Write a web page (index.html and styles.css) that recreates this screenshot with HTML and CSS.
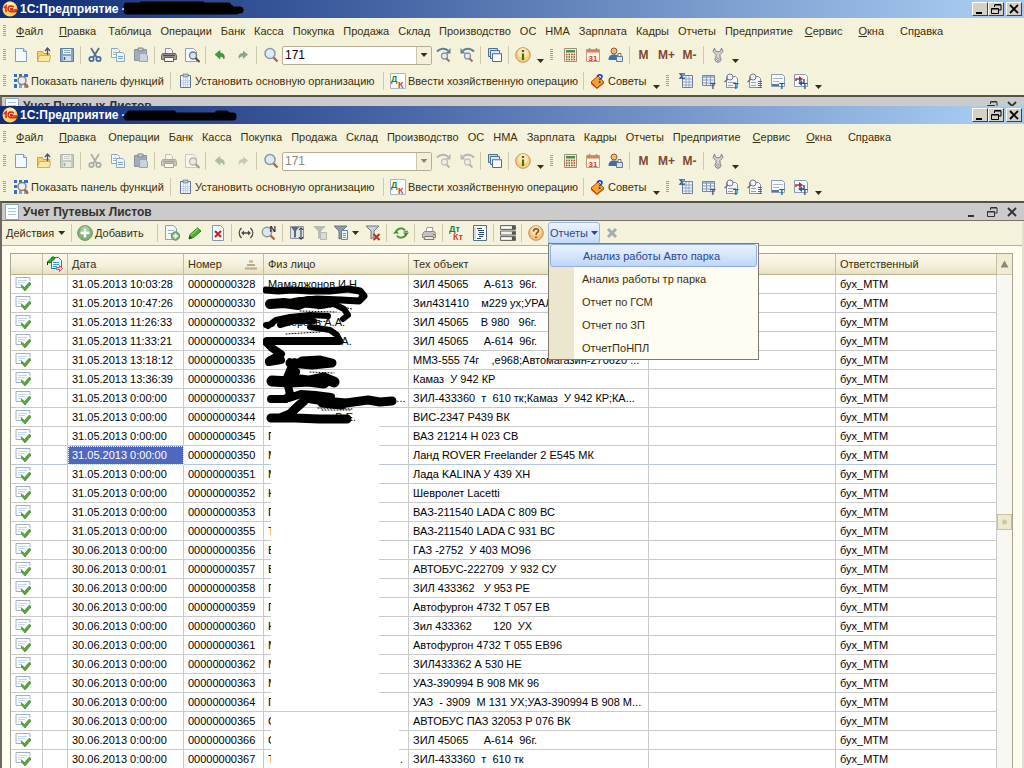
FILE: index.html
```html
<!DOCTYPE html>
<html lang="ru">
<head>
  <meta charset="UTF-8">
  <meta name="viewport" content="width=device-width, initial-scale=1.0">
  <title>1С:Предприятие - Учет Путевых Листов</title>
  <link rel="stylesheet" href="styles.css">
</head>
<body>
  <!-- Icon set, 16x16 -->
  <svg class="sprite" aria-hidden="true">
    <symbol id="logo" viewBox="0 0 16 16">
      <circle cx="8" cy="8" r="7.500" fill="#fbd25c"/><circle cx="8" cy="6" r="5.500" fill="#fdeaa0"/>
      <path d="M2 7l2-2v6M12 6c-3-2-6-1-6 2s2 3 9 2.500M11 8c-2-1-3 0-2 1h6" fill="none" stroke="#d9281c" stroke-width="1.600"/>
    </symbol>
    <symbol id="new" viewBox="0 0 16 16"><path d="M2.500 1.500h8l3 3v10h-11z" fill="#f4f9ff" stroke="#7f9dbd"/><path d="M10.500 1.500v3h3" fill="#cfdeee" stroke="#7f9dbd"/></symbol>
    <symbol id="open" viewBox="0 0 16 16"><path d="M1.500 14.500v-10h5l1 2h6v8z" fill="#f5cf6b" stroke="#cda044"/><path d="M1.500 14.500l2-6h11l-1 6z" fill="#fde9a6" stroke="#d9ae55"/><path d="M11.500 8V2M9 4l2.500-3L14 4" fill="none" stroke="#4b4f6b" stroke-width="1.300"/></symbol>
    <symbol id="save" viewBox="0 0 16 16"><path d="M1.500 1.500h13v13h-13z" fill="#86a8c8" stroke="#56799c"/><path d="M4 2h8v5H4z" fill="#eef5fb"/><path d="M5 3.500h6M5 5.500h6" stroke="#8fa8bd"/><path d="M4 9h8v5H4z" fill="#d2e0eb"/><path d="M5.500 10v3" stroke="#3f5f7e" stroke-width="1.500"/></symbol>
    <symbol id="cut" viewBox="0 0 16 16"><path d="M4 1l5.500 9M12 1L6.500 10" stroke="#5a6f86" stroke-width="1.800"/><circle cx="4.500" cy="12" r="2.200" fill="none" stroke="#3d6aa8" stroke-width="1.700"/><circle cx="11.500" cy="12" r="2.200" fill="none" stroke="#3d6aa8" stroke-width="1.700"/></symbol>
    <symbol id="copy" viewBox="0 0 16 16"><path d="M1.500 1.500h6l2 2v7h-8z" fill="#f2f7fc" stroke="#93a9c0"/><path d="M3 5.500h4M3 7.500h4" stroke="#9ab4d0"/><path d="M6.500 5.500h6l2 2v7h-8z" fill="#f2f7fc" stroke="#93a9c0"/><path d="M8 9.500h5M8 11.500h5" stroke="#7da2cc"/></symbol>
    <symbol id="paste" viewBox="0 0 16 16"><path d="M1.500 2.500h12v11h-12z" fill="#a3adb8" stroke="#8a94a0"/><path d="M5 1h5v3H5z" fill="#c9ced4" stroke="#7b858f"/><path d="M6.500 6.500h6l2 2v6h-8z" fill="#c8d3df" stroke="#96a4b3"/></symbol>
    <symbol id="print" viewBox="0 0 16 16"><path d="M4.500 6V1.500h5l2 2V6" fill="#fff" stroke="#8d8d9a"/><path d="M1.500 6.500h13l1 2v4h-15v-4z" fill="#a79f9c" stroke="#6e6462"/><path d="M3.500 10.500h9v4h-9z" fill="#fff" stroke="#6e5050"/><path d="M2 8.500h12" stroke="#5a4b49" stroke-width="1.500"/></symbol>
    <symbol id="preview" viewBox="0 0 16 16"><path d="M1.500 1.500h8l3 3v10h-11z" fill="#f6faff" stroke="#8ba3bd"/><circle cx="9" cy="8.500" r="3.500" fill="#d5e5f5" stroke="#70777f" stroke-width="1.300"/><path d="M11.500 11l4 4" stroke="#5b4b45" stroke-width="2.200"/></symbol>
    <symbol id="undo" viewBox="0 0 16 16"><path d="M3 7.500l5-4v2.500c4 0 5 3 4 6-1-2-2-2.500-4-2.500V12z" fill="#3f9a3a" stroke="#2f7b2c" stroke-width=".5"/></symbol>
    <symbol id="redo" viewBox="0 0 16 16"><path d="M13 7.500l-5-4v2.500c-4 0-5 3-4 6 1-2 2-2.500 4-2.500V12z" fill="#8aa58c"/></symbol>
    <symbol id="find" viewBox="0 0 16 16"><circle cx="7" cy="6.500" r="5" fill="#dcebf9" stroke="#8a97a6" stroke-width="1.500"/><path d="M10.500 10.500l4 4" stroke="#a8664f" stroke-width="2.400"/></symbol>
    <symbol id="find-next" viewBox="0 0 16 16"><path d="M1 4.500C4 1 9 .8 12 3.500" fill="none" stroke="#5c8097" stroke-width="2"/><path d="M14.500 1v5.500H9.500z" fill="#5c8097"/><circle cx="8.500" cy="9" r="3" fill="#e3edf5" stroke="#8794a2" stroke-width="1.300"/><path d="M10.500 11.500l3 3" stroke="#a0705e" stroke-width="2"/></symbol>
    <symbol id="find-prev" viewBox="0 0 16 16"><path d="M15 4.500C12 1 7 .8 4 3.500" fill="none" stroke="#5c8097" stroke-width="2"/><path d="M1.500 1v5.500h5z" fill="#5c8097"/><circle cx="8.500" cy="9" r="3" fill="#e3edf5" stroke="#8794a2" stroke-width="1.300"/><path d="M10.500 11.500l3 3" stroke="#a0705e" stroke-width="2"/></symbol>
    <symbol id="windows" viewBox="0 0 16 16"><path d="M1.500 1.500h9v8h-9z" fill="#c4d9ec" stroke="#4b7196"/><path d="M3.500 3.500h9v8h-9z" fill="#dbe9f6" stroke="#4b7196"/><path d="M5.500 6.500h9v8h-9z" fill="#fff" stroke="#4b7196"/><path d="M6 7h8" stroke="#8cb2d6"/></symbol>
    <symbol id="info" viewBox="0 0 16 16"><circle cx="8" cy="8" r="7.300" fill="#f6cf79" stroke="#bd9262"/><circle cx="8" cy="6" r="5" fill="#fbe7b4"/><path d="M8 3v2M8 6.500V13" stroke="#4f6b17" stroke-width="2.200"/></symbol>
    <symbol id="calc" viewBox="0 0 16 16"><path d="M2.500 1.500h12v13h-12z" fill="#f3efc9" stroke="#9c9176"/><path d="M4 3h9v2.500H4z" fill="#4f8a4e"/><path d="M4 7.500h9M4 10h9M4 12.500h9" stroke="#a24d33" stroke-width="1.400" stroke-dasharray="1.500 1"/></symbol>
    <symbol id="calendar" viewBox="0 0 16 16"><path d="M1.500 2.500h13v12h-13z" fill="#fff5ea" stroke="#c99a83"/><path d="M2 3h12v2.500H2z" fill="#e27e4b"/><path d="M4.500 1v3M11.500 1v3" stroke="#8a96a8" stroke-width="1.500"/><text x="8" y="13.500" class="glyph red" text-anchor="middle">31</text></symbol>
    <symbol id="user" viewBox="0 0 16 16"><circle cx="6" cy="4" r="3" fill="#f3bb65" stroke="#7f6340"/><path d="M.5 13c0-4 2-5.500 5.500-5.500s4.500 1 5 3.500v2z" fill="#3e6fa6"/><path d="M8.500 9.500h6v5h-6z" fill="#dbe5f0" stroke="#5f7792"/><path d="M10 9V6.500h3V9" fill="none" stroke="#5f7792"/></symbol>
    <symbol id="wrench" viewBox="0 0 16 16"><path d="M4.500 1l-1.500 3.500 3 3v2.500a3 3 0 1 0 4 0V7.500l3-3L11.500 1l-1 3L8 5 5.500 4z" fill="#d3d3d6" stroke="#77777f" stroke-width=".9"/><circle cx="8" cy="12.300" r="1.200" fill="#f5f2dc" stroke="#77777f" stroke-width=".7"/></symbol>
    <symbol id="panel" viewBox="0 0 16 16"><path d="M1 1h3v3H1zM6 1h3v3H6zM11 1h4v3h-4zM1 6h3v3H1zM1 11h3v4H1z" fill="#2f6fd0"/><path d="M6 11h3v4H6zM11 11h4v4h-4z" fill="#7aa8e6"/><circle cx="9" cy="7.500" r="4" fill="#e4f0fb" stroke="#8a7d70" stroke-width="1.400"/><path d="M11.500 10.500l3.500 4" stroke="#b0673d" stroke-width="2.200"/></symbol>
    <symbol id="org" viewBox="0 0 16 16"><path d="M3.500 2.500h10v12h-10z" fill="#f4f8fd" stroke="#5d7592"/><path d="M6 1h5v3H6z" fill="#b6c8dc" stroke="#5d7592" stroke-width=".7"/><path d="M6.500 5v9M8.500 5v9M10.500 5v9M4 7.500h9M4 9.500h9M4 11.500h9" stroke="#b9cce0" stroke-width=".8"/></symbol>
    <symbol id="dk" viewBox="0 0 16 16"><path d="M.5.500h15v15H.5z" fill="#fff" stroke="#a9b9cb"/><text x="1" y="9" class="glyph green mid">Д</text><text x="8" y="15" class="glyph red mid">К</text></symbol>
    <symbol id="tips" viewBox="0 0 16 16"><path d="M1 9l7-6 6 6-7 6z" fill="#f7a51c" stroke="#a25008"/><path d="M1 9.500l6 5.500v1L1 11zM7 15l7-5.500v1L7 16z" fill="#c6331d"/><text x="6" y="10" class="glyph blue big">?</text></symbol>
    <symbol id="rep-sum" viewBox="0 0 16 16"><path d="M4.500 2.500h10v12h-10z" fill="#f2f6fb" stroke="#6d819c"/><path d="M5 6h9M5 9h9M5 12h9M8 3v11M11 3v11" stroke="#8fa6c4"/><path d="M7 .8H2l2 2.200-2 2.200h5" fill="none" stroke="#24508f" stroke-width="1.200"/></symbol>
    <symbol id="rep-table" viewBox="0 0 16 16"><path d="M1.500 2.500h12v10h-12z" fill="#f2f6fb" stroke="#7487a3"/><path d="M2 4h11" stroke="#9dbadd" stroke-width="2"/><path d="M2 7h11M2 10h11M5.500 3v9M9.500 3v9" stroke="#8599b5"/><text x="9" y="15.500" class="glyph teal mid">T</text></symbol>
    <symbol id="rep-find" viewBox="0 0 16 16"><path d="M2.500 3.500h9l2 2v9h-11z" fill="#f2f4f8" stroke="#848da0"/><path d="M4 9.500h8M4 12.500h5" stroke="#9aa4b6"/><circle cx="6" cy="4" r="3" fill="#eef3fa" stroke="#7d7885"/><path d="M4 6L.5 9" stroke="#7d6f72" stroke-width="1.500"/><text x="9" y="15.500" class="glyph teal mid">T</text></symbol>
    <symbol id="rep-list" viewBox="0 0 16 16"><path d="M2.500 3.500h9l2 2v9h-11z" fill="#f2f4f8" stroke="#848da0"/><path d="M4 9.500h5M4 12.500h5" stroke="#9aa4b6"/><circle cx="6" cy="4" r="3" fill="#eef3fa" stroke="#7d7885"/><path d="M4 6L.5 9" stroke="#7d6f72" stroke-width="1.500"/><path d="M11 8.500h4M11 10.500h4M11 12.500h4M11 14.500h4" stroke="#8a5b4a"/></symbol>
    <symbol id="rep-text" viewBox="0 0 16 16"><path d="M1.500 1.500h11l2 2v10h-13z" fill="#f6f9fd" stroke="#8d9bb3"/><path d="M3 5.500h10M3 8.500h6" stroke="#a7b5c9"/><path d="M2 12h7" stroke="#5f7595" stroke-width="2"/><text x="9" y="15.500" class="glyph teal mid">T</text></symbol>
    <symbol id="rep-swap" viewBox="0 0 16 16"><path d="M1.500 1.500h11l2 2v10h-13z" fill="#f6f9fd" stroke="#8d9bb3"/><path d="M3 8V6h4" fill="none" stroke="#9c3b32" stroke-width="1.500"/><path d="M6 3l4 3-4 3z" fill="#9c3b32"/><path d="M11 6v4H8" fill="none" stroke="#2d5e98" stroke-width="1.500"/><path d="M9 7.500l-4 2.500 4 3z" fill="#2d5e98"/><text x="9" y="15.500" class="glyph teal mid">T</text></symbol>
    <symbol id="list" viewBox="0 0 16 16"><path d="M1.500.500h13v15h-13z" fill="#fbfdff" stroke="#8ea6bf"/><path d="M4 4.500h8M4 7.500h8M4 10.500h8" stroke="#a9c6e3"/></symbol>
    <symbol id="add" viewBox="0 0 16 16"><circle cx="8" cy="8" r="7.400" fill="#7fb476" stroke="#6b9a67"/><circle cx="8" cy="5.500" r="4.500" fill="#a3cb9a"/><path d="M8 3.500v9M3.500 8h9" stroke="#fff" stroke-width="2.400"/></symbol>
    <symbol id="add-copy" viewBox="0 0 16 16"><path d="M1.500.500h8l3 3v11h-11z" fill="#f3f8fd" stroke="#8aa1b8"/><path d="M4 5.500h6M4 8.500h4" stroke="#9fb4ca"/><circle cx="11.500" cy="11" r="4.200" fill="#7fb476" stroke="#5f9160"/><path d="M11.500 8.500v5M9 11h5" stroke="#fff" stroke-width="1.600"/></symbol>
    <symbol id="edit" viewBox="0 0 16 16"><path d="M2 14l1-4.500L10.500 3l3.500 3-7.500 6.500z" fill="#4eb12d" stroke="#2c7d18"/><path d="M4 10l7-6" stroke="#a8e08a"/><path d="M2 14l.7-3 2.300 2z" fill="#2d2d1d"/></symbol>
    <symbol id="delete" viewBox="0 0 16 16"><path d="M2.500.500h8l3 3v12h-11z" fill="#f6faff" stroke="#7f97b2"/><path d="M5 6l6 6M11 6l-6 6" stroke="#c6251c" stroke-width="2.200"/></symbol>
    <symbol id="period" viewBox="0 0 16 16"><path d="M3.500 3C.5 6 .5 10 3.500 13M12.500 3c3 3 3 7 0 10M4 8h8" fill="none" stroke="#4b4b45" stroke-width="1.400"/><path d="M3 8l3-2.500v5zM13 8l-3-2.500v5z" fill="#4b4b45"/></symbol>
    <symbol id="find-num" viewBox="0 0 16 16"><circle cx="6" cy="7" r="4.700" fill="#d9e7f4" stroke="#8a97a6" stroke-width="1.400"/><path d="M9.500 10.500l4 4" stroke="#a8664f" stroke-width="2.400"/><text x="8.500" y="7" class="glyph navy mid">N</text></symbol>
    <symbol id="filter-set" viewBox="0 0 16 16"><path d="M1.500 1.500h13v12h-13z" fill="#dfe4ea" stroke="#8d949d"/><path d="M2 2h8L7 6v6l-2 1V6z" fill="#5c6b7c"/><path d="M12 3v11M10 5l2-2.500L14 5M10 12l2 2.500 2-2.500" fill="none" stroke="#222b38"/></symbol>
    <symbol id="filter-cell" viewBox="0 0 16 16"><path d="M1 1h13L9 6v7l-3 1V6z" fill="#b9bbb7"/><path d="M8.500 7.500h6v7h-6z" fill="#dcdcd6" stroke="#b5b7b3"/></symbol>
    <symbol id="filter-list" viewBox="0 0 16 16"><path d="M1 1h13L9 6v7l-3 1V6z" fill="#8f9aa4" stroke="#6b7884"/><path d="M8.500 5.500h6v9h-6z" fill="#edf4fb" stroke="#5f83a8"/><path d="M10 8.500h3M10 10.500h3M10 12.500h3" stroke="#6f9ac4"/></symbol>
    <symbol id="filter-off" viewBox="0 0 16 16"><path d="M1 1h13L9 6v6l-3 2V6z" fill="#c9d1d8" stroke="#6b7884"/><path d="M8.500 9l6 6M14.500 9l-6 6" stroke="#b8301f" stroke-width="2"/></symbol>
    <symbol id="refresh" viewBox="0 0 16 16"><path d="M3 7c1-4 7-5 9-1.500M13 9c-1 4-7 5-9 1.500" fill="none" stroke="#4c9a42" stroke-width="2"/><path d="M15 5.500L9.500 7h5zM0 8.500h6L3 5.500zM16 7.500h-6l3 3.500z" fill="#3c8735"/></symbol>
    <symbol id="printer" viewBox="0 0 16 16"><path d="M5 7l1-4.500h6l-1 4.500" fill="#fff" stroke="#9a9a9a"/><path d="M1.500 8.500l2-2h10l1 2v4h-13z" fill="#c3c1ba" stroke="#8b8a84"/><path d="M4 11.500h8l1 3H3z" fill="#e9e7df" stroke="#77766f"/><path d="M12 9.500h1.500" stroke="#c23b2a"/></symbol>
    <symbol id="dtkt" viewBox="0 0 16 16"><text x="0" y="7" class="glyph green mid">Дт</text><text x="4" y="15" class="glyph red mid">Кт</text></symbol>
    <symbol id="text" viewBox="0 0 16 16"><path d="M1.500.500h13v15h-13z" fill="#fff" stroke="#55708c"/><path d="M3 2v12" stroke="#9dbcd8"/><path d="M5 3.500h5M6 5.500h6M7 7.500h5M6 9.500h6M7 11.500h4M5 13.500h4" stroke="#1f4466"/></symbol>
    <symbol id="rows" viewBox="0 0 16 16"><path d="M.5.500h15v4H.5zM.5 6h15v4H.5zM.5 11.500h15v4H.5z" fill="#e5e5e1" stroke="#6c6c68"/><path d="M12 1h3v3h-3zM12 6.500h3v3h-3zM12 12h3v3h-3z" fill="#55554f"/><path d="M2 2.500h8M2 8h8M2 13.500h8" stroke="#fff"/></symbol>
    <symbol id="help" viewBox="0 0 16 16"><circle cx="8" cy="8" r="7.300" fill="#f3c179" stroke="#c08f57"/><circle cx="8" cy="6" r="5" fill="#f9deb0"/><path d="M5.500 6.500c0-4 5.500-3.500 5-.5-.3 1.500-2.500 1.500-2.500 4M8 11.500v1.500" fill="none" stroke="#7f4a1f" stroke-width="1.500"/></symbol>
    <symbol id="cross" viewBox="0 0 16 16"><path d="M4 4l8 8M12 4l-8 8" stroke="#a3adb3" stroke-width="3"/></symbol>
    <symbol id="sort" viewBox="0 0 16 16"><path d="M6 5.500h4M4 9h8M2 12.500h12" stroke="#b9ac80" stroke-width="2"/></symbol>
    <symbol id="state" viewBox="0 0 16 16"><path d="M4.500 1.500h7l3 3v8h-10z" fill="#f1fbff" stroke="#2b72b9"/><path d="M6 6.500h6M6 8.500h6M6 10.500h4" stroke="#36a3d5"/><path d="M.5 6L6 .5l2 2L3 7z" fill="#2fae2a" stroke="#14611a"/><path d="M.5 6v3" stroke="#222"/><path d="M9.500 11.500h3v-2l3 3-3 3v-2h-3z" fill="#fbc4d2" stroke="#cf2f5f" stroke-width=".8"/></symbol>
    <symbol id="posted" viewBox="0 0 16 16"><path d="M15 5V1.500H1v10h6" fill="#fcfdff" stroke="#9cb2c6"/><path d="M3 4.500h9M3 6.500h7M3 8.500h4" stroke="#c3d6e8"/><path d="M6.500 9l3 2.500L14.500 6l1.500 2-6 7-3.500-4z" fill="#55a838" stroke="#3b8728" stroke-width=".7"/></symbol>
    <symbol id="min" viewBox="0 0 12 12"><path d="M2 10h6" stroke="currentColor" stroke-width="2"/></symbol>
    <symbol id="restore" viewBox="0 0 12 12"><path d="M4.500 4V2H11v5H9M4.500 1.500H11" fill="none" stroke="currentColor"/><path d="M1.500 5.500h7v5h-7zM1.500 6h7" fill="none" stroke="currentColor"/></symbol>
    <symbol id="close" viewBox="0 0 12 12"><path d="M2 2l8 8M10 2l-8 8" stroke="currentColor" stroke-width="1.800"/></symbol>
  </svg>

  <!-- Back window -->
  <section class="window window-back">
    <header class="titlebar">
      <svg class="icon"><use href="#logo"/></svg>
      <h1>1C:Предприятие -</h1>
      <svg class="smear" viewBox="0 0 120 14"><path d="M1 4h101M1 9h109M16 3h60M96 8h18M8 6h96" fill="none" stroke="#000" stroke-width="7" stroke-linecap="round"/></svg>
      <div class="win-buttons">
        <button aria-label="Свернуть"><svg><use href="#min"/></svg></button>
        <button aria-label="Восстановить"><svg><use href="#restore"/></svg></button>
        <button class="win-close" aria-label="Закрыть"><svg><use href="#close"/></svg></button>
      </div>
    </header>
    <nav class="menubar">
      <span class="grip"></span>
      <div class="menu-group wide"><button><u>Ф</u>айл</button><button><u>П</u>равка</button></div>
      <div class="menu-group"><button>Таблица</button><button>Операции</button><button>Банк</button><button>Касса</button><button>Покупка</button><button>Продажа</button><button>Склад</button><button>Производство</button><button>ОС</button><button>НМА</button><button>Зарплата</button><button>Кадры</button><button>Отчеты</button><button>Предприятие</button></div>
      <div class="menu-group wide"><button><u>С</u>ервис</button><button><u>О</u>кна</button><button>Сп<u>р</u>авка</button></div>
    </nav>
    <div class="toolbar">
      <span class="grip"></span>
      <button class="tool" aria-label="Новый"><svg class="icon"><use href="#new"/></svg></button>
      <button class="tool" aria-label="Открыть"><svg class="icon"><use href="#open"/></svg></button>
      <button class="tool" aria-label="Сохранить"><svg class="icon"><use href="#save"/></svg></button>
      <span class="sep"></span>
      <button class="tool" aria-label="Вырезать"><svg class="icon"><use href="#cut"/></svg></button>
      <button class="tool" aria-label="Копировать"><svg class="icon"><use href="#copy"/></svg></button>
      <button class="tool" aria-label="Вставить"><svg class="icon"><use href="#paste"/></svg></button>
      <span class="sep"></span>
      <button class="tool" aria-label="Печать"><svg class="icon"><use href="#print"/></svg></button>
      <button class="tool" aria-label="Просмотр"><svg class="icon"><use href="#preview"/></svg></button>
      <span class="sep"></span>
      <button class="tool" aria-label="Отменить"><svg class="icon"><use href="#undo"/></svg></button>
      <button class="tool" aria-label="Вернуть"><svg class="icon"><use href="#redo"/></svg></button>
      <span class="sep"></span>
      <button class="tool" aria-label="Найти"><svg class="icon"><use href="#find"/></svg></button>
      <div class="search"><input type="text" value="171" aria-label="Поиск"><button aria-label="История поиска"><span class="arrow"></span></button></div>
      <button class="tool" aria-label="Найти следующий"><svg class="icon"><use href="#find-next"/></svg></button>
      <button class="tool" aria-label="Найти предыдущий"><svg class="icon"><use href="#find-prev"/></svg></button>
      <span class="sep"></span>
      <button class="tool" aria-label="Окна"><svg class="icon"><use href="#windows"/></svg></button>
      <span class="sep"></span>
      <button class="tool" aria-label="Справка"><svg class="icon"><use href="#info"/></svg></button>
      <button class="more" aria-label="Еще"><span class="arrow"></span></button>
      <span class="grip"></span>
      <button class="tool" aria-label="Калькулятор"><svg class="icon"><use href="#calc"/></svg></button>
      <button class="tool" aria-label="Календарь"><svg class="icon"><use href="#calendar"/></svg></button>
      <button class="tool" aria-label="Пользователи"><svg class="icon"><use href="#user"/></svg></button>
      <span class="sep"></span>
      <button class="tool memory">M</button>
      <button class="tool memory">M+</button>
      <button class="tool memory">M-</button>
      <span class="sep"></span>
      <button class="tool" aria-label="Сервис"><svg class="icon"><use href="#wrench"/></svg></button>
      <button class="more" aria-label="Еще"><span class="arrow"></span></button>
    </div>
    <div class="toolbar toolbar-text">
      <span class="grip"></span>
      <button class="command cmd-panel"><svg class="icon"><use href="#panel"/></svg>Показать панель функций</button>
      <span class="sep"></span>
      <button class="command cmd-org"><svg class="icon"><use href="#org"/></svg>Установить основную организацию</button>
      <span class="sep"></span>
      <button class="command cmd-entry"><svg class="icon"><use href="#dk"/></svg>Ввести хозяйственную операцию</button>
      <span class="sep"></span>
      <button class="command cmd-tips"><svg class="icon"><use href="#tips"/></svg>Советы</button>
      <button class="more" aria-label="Еще"><span class="arrow"></span></button>
      <span class="grip"></span>
      <button class="tool" aria-label="Итоги"><svg class="icon"><use href="#rep-sum"/></svg></button>
      <button class="tool" aria-label="Таблица"><svg class="icon"><use href="#rep-table"/></svg></button>
      <button class="tool" aria-label="Анализ счета"><svg class="icon"><use href="#rep-find"/></svg></button>
      <button class="tool" aria-label="Карточка"><svg class="icon"><use href="#rep-list"/></svg></button>
      <button class="tool" aria-label="Отчет"><svg class="icon"><use href="#rep-text"/></svg></button>
      <button class="tool" aria-label="Обороты"><svg class="icon"><use href="#rep-swap"/></svg></button>
      <button class="more" aria-label="Еще"><span class="arrow"></span></button>
    </div>
    <div class="caption">
      <svg class="icon"><use href="#list"/></svg>
      <h2>Учет Путевых Листов</h2>
      <div class="caption-buttons">
        <button aria-label="Восстановить"><svg><use href="#restore"/></svg></button>
        <button aria-label="Закрыть"><svg><use href="#close"/></svg></button>
      </div>
    </div>
  </section>

  <!-- Front window -->
  <section class="window window-front">
    <header class="titlebar">
      <svg class="icon"><use href="#logo"/></svg>
      <h1>1C:Предприятие -</h1>
      <svg class="smear" viewBox="0 0 120 14"><path d="M1 9h93M4 6h43M4 8h103M66 9h41M92 6h8" fill="none" stroke="#000" stroke-width="7" stroke-linecap="round"/></svg>
      <div class="win-buttons">
        <button aria-label="Свернуть"><svg><use href="#min"/></svg></button>
        <button aria-label="Восстановить"><svg><use href="#restore"/></svg></button>
        <button class="win-close" aria-label="Закрыть"><svg><use href="#close"/></svg></button>
      </div>
    </header>
    <nav class="menubar">
      <span class="grip"></span>
      <div class="menu-group wide"><button><u>Ф</u>айл</button><button><u>П</u>равка</button></div>
      <div class="menu-group"><button>Операции</button><button>Банк</button><button>Касса</button><button>Покупка</button><button>Продажа</button><button>Склад</button><button>Производство</button><button>ОС</button><button>НМА</button><button>Зарплата</button><button>Кадры</button><button>Отчеты</button><button>Предприятие</button></div>
      <div class="menu-group wide"><button><u>С</u>ервис</button><button><u>О</u>кна</button><button>Сп<u>р</u>авка</button></div>
    </nav>
    <div class="toolbar">
      <span class="grip"></span>
      <button class="tool" aria-label="Новый"><svg class="icon"><use href="#new"/></svg></button>
      <button class="tool" aria-label="Открыть"><svg class="icon"><use href="#open"/></svg></button>
      <button class="tool" aria-label="Сохранить" disabled><svg class="icon"><use href="#save"/></svg></button>
      <span class="sep"></span>
      <button class="tool" aria-label="Вырезать" disabled><svg class="icon"><use href="#cut"/></svg></button>
      <button class="tool" aria-label="Копировать"><svg class="icon"><use href="#copy"/></svg></button>
      <button class="tool" aria-label="Вставить"><svg class="icon"><use href="#paste"/></svg></button>
      <span class="sep"></span>
      <button class="tool" aria-label="Печать" disabled><svg class="icon"><use href="#print"/></svg></button>
      <button class="tool" aria-label="Просмотр" disabled><svg class="icon"><use href="#preview"/></svg></button>
      <span class="sep"></span>
      <button class="tool" aria-label="Отменить" disabled><svg class="icon"><use href="#undo"/></svg></button>
      <button class="tool" aria-label="Вернуть" disabled><svg class="icon"><use href="#redo"/></svg></button>
      <span class="sep"></span>
      <button class="tool" aria-label="Найти"><svg class="icon"><use href="#find"/></svg></button>
      <div class="search"><input type="text" value="171" aria-label="Поиск" disabled><button aria-label="История поиска" disabled><span class="arrow"></span></button></div>
      <button class="tool" aria-label="Найти следующий" disabled><svg class="icon"><use href="#find-next"/></svg></button>
      <button class="tool" aria-label="Найти предыдущий" disabled><svg class="icon"><use href="#find-prev"/></svg></button>
      <span class="sep"></span>
      <button class="tool" aria-label="Окна"><svg class="icon"><use href="#windows"/></svg></button>
      <span class="sep"></span>
      <button class="tool" aria-label="Справка"><svg class="icon"><use href="#info"/></svg></button>
      <button class="more" aria-label="Еще"><span class="arrow"></span></button>
      <span class="grip"></span>
      <button class="tool" aria-label="Калькулятор"><svg class="icon"><use href="#calc"/></svg></button>
      <button class="tool" aria-label="Календарь"><svg class="icon"><use href="#calendar"/></svg></button>
      <button class="tool" aria-label="Пользователи"><svg class="icon"><use href="#user"/></svg></button>
      <span class="sep"></span>
      <button class="tool memory">M</button>
      <button class="tool memory">M+</button>
      <button class="tool memory">M-</button>
      <span class="sep"></span>
      <button class="tool" aria-label="Сервис"><svg class="icon"><use href="#wrench"/></svg></button>
      <button class="more" aria-label="Еще"><span class="arrow"></span></button>
    </div>
    <div class="toolbar toolbar-text">
      <span class="grip"></span>
      <button class="command cmd-panel"><svg class="icon"><use href="#panel"/></svg>Показать панель функций</button>
      <span class="sep"></span>
      <button class="command cmd-org"><svg class="icon"><use href="#org"/></svg>Установить основную организацию</button>
      <span class="sep"></span>
      <button class="command cmd-entry"><svg class="icon"><use href="#dk"/></svg>Ввести хозяйственную операцию</button>
      <span class="sep"></span>
      <button class="command cmd-tips"><svg class="icon"><use href="#tips"/></svg>Советы</button>
      <button class="more" aria-label="Еще"><span class="arrow"></span></button>
      <span class="grip"></span>
      <button class="tool" aria-label="Итоги"><svg class="icon"><use href="#rep-sum"/></svg></button>
      <button class="tool" aria-label="Таблица"><svg class="icon"><use href="#rep-table"/></svg></button>
      <button class="tool" aria-label="Анализ счета"><svg class="icon"><use href="#rep-find"/></svg></button>
      <button class="tool" aria-label="Карточка"><svg class="icon"><use href="#rep-list"/></svg></button>
      <button class="tool" aria-label="Отчет"><svg class="icon"><use href="#rep-text"/></svg></button>
      <button class="tool" aria-label="Обороты"><svg class="icon"><use href="#rep-swap"/></svg></button>
      <button class="more" aria-label="Еще"><span class="arrow"></span></button>
    </div>
    <div class="caption">
      <svg class="icon"><use href="#list"/></svg>
      <h2>Учет Путевых Листов</h2>
      <div class="caption-buttons">
        <button aria-label="Свернуть"><svg><use href="#min"/></svg></button>
        <button aria-label="Восстановить"><svg><use href="#restore"/></svg></button>
        <button aria-label="Закрыть"><svg><use href="#close"/></svg></button>
      </div>
    </div>

    <main class="form">
      <div class="actions">
        <button class="command actions-menu">Действия<span class="arrow"></span></button>
        <span class="sep"></span>
        <button class="command add-button"><svg class="icon"><use href="#add"/></svg><span><u>Д</u>обавить</span></button>
        <span class="sep"></span>
        <button class="tool" aria-label="Добавить копированием"><svg class="icon"><use href="#add-copy"/></svg></button>
        <button class="tool" aria-label="Изменить"><svg class="icon"><use href="#edit"/></svg></button>
        <button class="tool" aria-label="Пометить на удаление"><svg class="icon"><use href="#delete"/></svg></button>
        <span class="sep"></span>
        <button class="tool" aria-label="Интервал дат"><svg class="icon"><use href="#period"/></svg></button>
        <button class="tool" aria-label="Поиск по номеру"><svg class="icon"><use href="#find-num"/></svg></button>
        <span class="sep"></span>
        <button class="tool" aria-label="Отбор и сортировка"><svg class="icon"><use href="#filter-set"/></svg></button>
        <button class="tool" aria-label="Отбор по значению"><svg class="icon"><use href="#filter-cell"/></svg></button>
        <button class="tool tool-drop" aria-label="Список отборов"><svg class="icon"><use href="#filter-list"/></svg><span class="arrow"></span></button>
        <button class="tool" aria-label="Отключить отбор"><svg class="icon"><use href="#filter-off"/></svg></button>
        <span class="sep"></span>
        <button class="tool" aria-label="Обновить"><svg class="icon"><use href="#refresh"/></svg></button>
        <span class="sep"></span>
        <button class="tool" aria-label="Печать"><svg class="icon"><use href="#printer"/></svg></button>
        <span class="sep"></span>
        <button class="tool" aria-label="Проводки"><svg class="icon"><use href="#dtkt"/></svg></button>
        <button class="tool" aria-label="Описание"><svg class="icon"><use href="#text"/></svg></button>
        <span class="sep"></span>
        <button class="tool" aria-label="Настройка списка"><svg class="icon"><use href="#rows"/></svg></button>
        <span class="sep"></span>
        <button class="tool" aria-label="Помощь"><svg class="icon"><use href="#help"/></svg></button>
        <div class="dropdown">
          <button class="dropdown-toggle">Отчеты<span class="arrow"></span></button>
          <div class="dropdown-menu">
            <button class="active">Анализ работы Авто парка</button>
            <button>Анализ работы тр парка</button>
            <button>Отчет по ГСМ</button>
            <button>Отчет по ЗП</button>
            <button>ОтчетПоНПЛ</button>
          </div>
        </div>
        <button class="tool" aria-label="Закрыть форму"><svg class="icon"><use href="#cross"/></svg></button>
      </div>

      <div class="grid">
        <div class="list">
          <table>
            <colgroup>
              <col class="c-icon"><col class="c-state"><col class="c-date"><col class="c-num"><col class="c-name"><col class="c-object"><col class="c-empty"><col>
            </colgroup>
            <thead>
              <tr>
                <th></th>
                <th class="state"><svg class="icon"><use href="#state"/></svg></th>
                <th>Дата</th>
                <th><div class="sorted">Номер<svg class="icon"><use href="#sort"/></svg></div></th>
                <th>Физ лицо</th>
                <th>Тех объект</th>
                <th></th>
                <th>Ответственный</th>
              </tr>
            </thead>
            <tbody id="rows-body"></tbody>
          </table>
        </div>
        <div class="scrollbar">
          <button class="scroll-up" aria-label="Вверх"></button>
          <div class="scroll-thumb"></div>
        </div>
        <svg class="strokes" viewBox="263 274 146 494">
          <path d="M271 423h108v288H271zM271 712h128v56H271z" fill="#fff"/>
          <g fill="none" stroke="#000" stroke-linecap="round" stroke-linejoin="round">
            <path stroke-width="7" d="M266 290l12 1 14-1 18 1 20 0 18-2 12 2 4 5-5 5-18-1-24-1-20 2-10 2"/>
            <path stroke-width="10" d="M270 304l14-1 14 2 10-4 14 1M300 302l20 2 12-2"/>
            <path stroke-width="6" d="M310 300l22 3 12 6 4 6-5 4M290 317l20-2 18 1M268 326l8-6 14-3M266 325l6-1"/>
            <path stroke-width="6" d="M310 327l20 3 7 5 3 6M280 325l14-4 20 0"/>
            <path stroke-width="8" d="M267 341h26l24 0 22 0M266 342l6 6 9 6-12 7M269 362l12-2"/>
            <path stroke-width="9" d="M332 363l-12-3-18 1-10 6-5 12M290 363l22 2 20-2"/>
            <path stroke-width="11" d="M272 381l18 1 20-1 14-3 10 4M300 380l24 3"/>
            <path stroke-width="8" d="M296 372l-8 14 2 8-4 5-15 0M289 398l12-4 14 1 16 2"/>
            <path stroke-width="9" d="M306 398l18 3 22 2 22-3 12 2 12-1M322 403l20 2"/>
            <path stroke-width="9" d="M304 401l-8 7-6 6-10 4M271 418h24l24 1 28 0"/>
            <path stroke-width="1" stroke-dasharray="1 2" d="M318 309l20-3 14 3M300 324l28-3M322 410l30 0M318 408l34 1M300 311l36 1M286 334l34-2M310 372l24 1"/>
          </g>
        </svg>
      </div>
    </main>
  </section>

  <script>
    // date, number, name, object
    const rows = [
      ['31.05.2013 10:03:28', '328', 'Мамаджонов И.Н.', 'ЗИЛ 45065     А-613  96г.'],
      ['31.05.2013 10:47:26', '330', '', 'Зил431410    м229 ух;УРАЛ 4320'],
      ['31.05.2013 11:26:33', '332', '   имороев А.А.', 'ЗИЛ 45065    В 980   96г.'],
      ['31.05.2013 11:33:21', '334', '                       .А.', 'ЗИЛ 45065     А-614  96г.'],
      ['31.05.2013 13:18:12', '335', 'Т    зе', 'ММЗ-555 74г    ,е968;Автомагазин-270620 ...'],
      ['31.05.2013 13:36:39', '336', '', 'Камаз  У 942 КР'],
      ['31.05.2013 0:00:00', '337', '                                          ...', 'ЗИЛ-433360  т  610 тк;Камаз  У 942 КР;КА...'],
      ['31.05.2013 0:00:00', '344', '                      В.Е.', 'ВИС-2347 Р439 ВК'],
      ['31.05.2013 0:00:00', '345', 'П', 'ВАЗ 21214 Н 023 СВ'],
      ['31.05.2013 0:00:00', '350', 'М', 'Ланд ROVER Freelander 2 Е545 МК'],
      ['31.05.2013 0:00:00', '351', 'М', 'Лада KALINA У 439 ХН'],
      ['31.05.2013 0:00:00', '352', 'К', 'Шевролет Lacetti'],
      ['31.05.2013 0:00:00', '353', 'П', 'ВАЗ-211540 LADA С 809 ВС'],
      ['31.05.2013 0:00:00', '355', 'Т', 'ВАЗ-211540 LADA С 931 ВС'],
      ['30.06.2013 0:00:00', '356', 'Б', 'ГАЗ -2752  У 403 МО96'],
      ['30.06.2013 0:00:01', '357', 'Б', 'АВТОБУС-222709  У 932 СУ'],
      ['30.06.2013 0:00:00', '358', 'П', 'ЗИЛ 433362   У 953 РЕ'],
      ['30.06.2013 0:00:00', '359', 'П', 'Автофургон 4732 Т 057 ЕВ'],
      ['30.06.2013 0:00:00', '360', 'К', 'Зил 433362       120  УХ'],
      ['30.06.2013 0:00:00', '361', 'М', 'Автофургон 4732 Т 055 ЕВ96'],
      ['30.06.2013 0:00:00', '362', 'М', 'ЗИЛ433362 А 530 НЕ'],
      ['30.06.2013 0:00:00', '363', 'М', 'УАЗ-390994 В 908 МК 96'],
      ['30.06.2013 0:00:00', '364', 'П', 'УАЗ  - 3909  М 131 УХ;УАЗ-390994 В 908 М...'],
      ['30.06.2013 0:00:00', '365', 'С', 'АВТОБУС ПАЗ 32053 Р 076 ВК'],
      ['30.06.2013 0:00:00', '366', 'С', 'ЗИЛ 45065     А-614  96г.'],
      ['30.06.2013 0:00:00', '367', 'Т                                         .', 'ЗИЛ-433360  т  610 тк']
    ];

    const body = document.getElementById('rows-body');
    rows.forEach(([date, num, name, object]) => {
      const tr = document.createElement('tr');
      if (num === '350') tr.classList.add('selected');
      tr.innerHTML = `<td><svg class="icon"><use href="#posted"/></svg></td><td></td>
        <td class="date">${date}</td><td>00000000${num}</td><td>${name}</td>
        <td>${object}</td><td></td><td>бух_МТМ</td>`;
      body.appendChild(tr);
    });
  </script>
</body>
</html>
```
FILE: styles.css
```css
* {
  box-sizing: border-box;
}

html,
body {
  height: 100%;
}

body {
  margin: 0;
  overflow: hidden;
  display: flex;
  flex-direction: column;
  font-family: "Liberation Sans", Arial, sans-serif;
  font-size: 11px;
  color: #3a2f0a;
  background: #f5f2dc;
}

button {
  font: inherit;
  color: inherit;
  background: none;
  border: none;
  padding: 0;
  white-space: nowrap;
}

h1,
h2 {
  margin: 0;
  font-size: 12px;
  white-space: nowrap;
}

.sprite {
  display: none;
}

.icon {
  width: 16px;
  height: 16px;
  flex: none;
  display: block;
}

/* letters inside icons */
.glyph {
  font-family: "Liberation Sans", Arial, sans-serif;
  font-size: 8px;
  font-weight: bold;
}

.mid { font-size: 9px; }
.big { font-size: 12px; }
.red { fill: #d8392b; }
.green { fill: #1f7f2d; }
.blue { fill: #1f35c9; }
.navy { fill: #1b2c44; }
.teal { fill: #1f5f86; }

/* windows */
.window {
  display: flex;
  flex-direction: column;
  flex: none;
}

.window-back {
  height: 106px;
  overflow: hidden;
}

.window-front {
  flex: 1;
  min-height: 0;
}

.titlebar {
  height: 18px;
  flex: none;
  display: flex;
  align-items: center;
  padding: 0 2px;
  background: linear-gradient(90deg, #0f2c74, #3f5c9e 33%, #7898cb 67%, #a6caf0 96%);
  color: #fff;
}

.titlebar h1 {
  margin-left: 2px;
}

.smear {
  width: 120px;
  height: 14px;
  overflow: visible;
}

.win-buttons {
  display: flex;
  margin-left: auto;
}

.win-buttons button {
  width: 16px;
  height: 14px;
  display: flex;
  align-items: center;
  justify-content: center;
  background: #d4d0c8;
  color: #000;
  border: 1px solid;
  border-color: #fff #404040 #404040 #fff;
}

.win-buttons .win-close {
  margin-left: 2px;
}

.win-buttons svg {
  width: 12px;
  height: 12px;
  flex: none;
}

.menubar {
  height: 25px;
  flex: none;
  display: flex;
  align-items: center;
}

.menu-group {
  display: flex;
  gap: 9px;
  margin-right: 12px;
}

.menu-group.wide {
  gap: 16px;
}

.grip {
  width: 3px;
  height: 12px;
  flex: none;
  margin: 0 3px;
  background: repeating-linear-gradient(#a8a18a 0 1px, transparent 1px 2px);
}

.more + .grip {
  margin-right: 5px;
}

.menubar .grip {
  margin-right: 10px;
}

.toolbar {
  height: 24px;
  flex: none;
  display: flex;
  align-items: center;
}

.toolbar-text {
  height: 28px;
}

.tool {
  width: 23px;
  height: 22px;
  flex: none;
  display: flex;
  align-items: center;
  justify-content: center;
}

.tool-drop {
  width: 30px;
  gap: 3px;
}

.tool:disabled .icon {
  filter: grayscale(60%);
  opacity: 0.5;
}

.memory {
  font-size: 12px;
  font-weight: bold;
  color: #80482f;
}

.sep {
  width: 1px;
  height: 18px;
  flex: none;
  margin: 0 2px;
  background: #cfc9ae;
}

.arrow {
  display: block;
  width: 7px;
  height: 4px;
  flex: none;
  background: currentColor;
  clip-path: polygon(0 0, 100% 0, 50% 100%);
}

.more {
  width: 13px;
  height: 22px;
  display: flex;
  align-items: flex-end;
  justify-content: center;
  padding-bottom: 3px;
}

.search {
  width: 150px;
  height: 19px;
  flex: none;
  display: flex;
  border: 1px solid #b5ae92;
  border-radius: 2px;
  background: #fff;
}

.search input {
  flex: 1;
  min-width: 0;
  border: none;
  padding: 0 2px;
  font: inherit;
  font-size: 12px;
  color: #000;
  background: none;
}

.search input:disabled,
.search button:disabled {
  color: #8b8775;
}

.search button {
  width: 15px;
  display: flex;
  align-items: center;
  justify-content: center;
  background: #f3efd8;
  border-left: 1px solid #cdc6a9;
}

.command {
  height: 22px;
  flex: none;
  display: flex;
  align-items: center;
  gap: 2px;
  padding: 0 0 0 4px;
}

.cmd-panel { width: 159px; }
.cmd-org { width: 208px; }
.cmd-entry { width: 195px; }
.cmd-tips { width: 64px; }

/* document caption */
.caption {
  height: 20px;
  flex: none;
  display: flex;
  align-items: center;
  gap: 3px;
  padding: 0 6px 0 2px;
  border-top: 2px solid #55524c;
  border-bottom: 1px solid #77736b;
  border-left: 2px solid #6d6862;
  background: #cbcbcb;
  color: #33312e;
}

.caption-buttons {
  display: flex;
  gap: 8px;
  margin-left: auto;
}

.caption-buttons svg {
  display: block;
  width: 12px;
  height: 12px;
}

.form {
  flex: 1;
  min-height: 0;
  display: flex;
  flex-direction: column;
  border-left: 2px solid #6d6862;
  border-right: 2px solid #e3dfcf;
  background: #fffdf0;
}

.actions {
  height: 25px;
  flex: none;
  display: flex;
  align-items: center;
  background: #f5f2dc;
  border-bottom: 1px solid #b7b199;
}

.actions-menu {
  width: 67px;
  gap: 4px;
}

.add-button {
  width: 81px;
  padding-left: 3px;
}

.dropdown {
  position: relative;
  margin-left: 1px;
}

.dropdown-toggle {
  height: 22px;
  width: 52px;
  display: flex;
  align-items: center;
  justify-content: center;
  gap: 3px;
  color: #2c478c;
  border: 1px solid #9db7e0;
  border-radius: 3px;
  background: linear-gradient(#eaf2fe, #c5d9f7);
}

.dropdown-menu {
  position: absolute;
  z-index: 2;
  top: 100%;
  left: 0;
  width: 211px;
  display: flex;
  flex-direction: column;
  margin-top: -1px;
  padding: 0 1px;
  border: 1px solid #7c7a72;
  background: linear-gradient(90deg, #ede6cf 25px, #fffcf2 25px);
}

.dropdown-menu button {
  height: 23px;
  padding-left: 32px;
  text-align: left;
}

.dropdown-menu .active {
  color: #2c478c;
  border: 1px solid #8fafe0;
  border-radius: 3px;
  background: linear-gradient(#eaf3ff, #bfd6f8);
}

/* list */
.grid {
  position: relative;
  flex: 1;
  min-height: 0;
  display: flex;
  overflow: hidden;
  margin: 7px 9px 0 8px;
  border: 1px solid #aaa58e;
  border-bottom: none;
  background: #fff;
}

.list {
  flex: 1;
  min-width: 0;
}

table {
  width: 100%;
  table-layout: fixed;
  border-collapse: separate;
  border-spacing: 0;
}

.c-icon { width: 32px; }
.c-state { width: 25px; }
.c-date { width: 116px; }
.c-num { width: 80px; }
.c-name { width: 145px; }
.c-object { width: 240px; }
.c-empty { width: 187px; }

th {
  height: 21px;
  padding: 0 4px;
  text-align: left;
  font-weight: normal;
  border-right: 1px solid #c5bf9f;
  border-bottom: 1px solid #b9b393;
  background: linear-gradient(#fbf8ec, #f3efda 60%, #e6dfc1);
}

.sorted {
  display: flex;
  align-items: center;
  justify-content: space-between;
}

td {
  height: 19px;
  padding: 0 4px;
  overflow: hidden;
  white-space: pre;
  color: #000;
  border-right: 1px solid #cacaca;
  border-bottom: 1px solid #cacaca;
}

.selected td {
  border-bottom-color: #b4c8dc;
}

.selected .date {
  color: #fff;
  background: #4f68bd;
  outline: 1px dotted #fff;
  outline-offset: -1px;
}

.scrollbar {
  width: 15px;
  flex: none;
  background: #f8f7f1;
}

.scroll-up {
  width: 15px;
  height: 21px;
  display: flex;
  align-items: center;
  justify-content: center;
  border-bottom: 1px solid #cfc9ad;
  background: #f1ecd5;
}

.scroll-up::before {
  content: "";
  width: 8px;
  height: 7px;
  background: #8a8778;
  clip-path: polygon(50% 0, 100% 100%, 0 100%);
}

.scroll-thumb {
  height: 16px;
  margin-top: 239px;
  border: 1px solid #c8c19c;
  background: radial-gradient(circle, #cdc8a4 2px, #efeacb 3px);
}

/* marker strokes over the names */
.strokes {
  position: absolute;
  top: 20px;
  left: 252px;
  width: 146px;
  height: 494px;
}
```
